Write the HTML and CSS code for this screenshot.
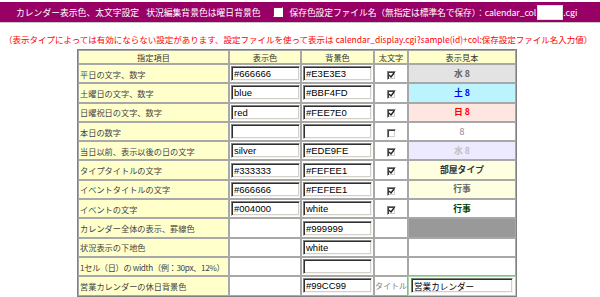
FILE: index.html
```html
<!DOCTYPE html>
<html lang="ja">
<head>
<meta charset="utf-8">
<title>カレンダー表示色、太文字設定</title>
<link rel="stylesheet" href="styles.css">
</head>
<body>
<div class="topbar">
  <span class="title">カレンダー表示色、太文字設定</span>
  <span class="lbl">状況編集背景色は曜日背景色</span>
  <span class="cb cb-bar"></span>
  <span class="lbl tight">保存色設定ファイル名（無指定は標準名で保存）：calendar_col</span>
  <input class="fname" type="text" value="">
  <span class="lbl">.cgi</span>
</div>
<p class="note">（表示タイプによっては有効にならない設定があります、設定ファイルを使って表示は calendar_display.cgi?sample(id)+col:保存設定ファイル名入力値）</p>
<table class="grid">
  <colgroup>
    <col class="c1"><col class="c2"><col class="c3"><col class="c4"><col class="c5">
  </colgroup>
  <tr class="head">
    <th>指定項目</th><th>表示色</th><th>背景色</th><th>太文字</th><th>表示見本</th>
  </tr>
  <tr>
    <td class="item">平日の文字、数字</td>
    <td><input class="tx" type="text" value="#666666"></td>
    <td><input class="tx" type="text" value="#E3E3E3"></td>
    <td class="ck"><span class="cb"><svg viewBox="0 0 7 7"><path d="M1 3 L3 5 L6 1" /></svg></span></td>
    <td class="smp" style="background:#E3E3E3;color:#666666">水 8</td>
  </tr>
  <tr>
    <td class="item">土曜日の文字、数字</td>
    <td><input class="tx" type="text" value="blue"></td>
    <td><input class="tx" type="text" value="#BBF4FD"></td>
    <td class="ck"><span class="cb"><svg viewBox="0 0 7 7"><path d="M1 3 L3 5 L6 1" /></svg></span></td>
    <td class="smp" style="background:#BBF4FD;color:blue">土 8</td>
  </tr>
  <tr>
    <td class="item">日曜祝日の文字、数字</td>
    <td><input class="tx" type="text" value="red"></td>
    <td><input class="tx" type="text" value="#FEE7E0"></td>
    <td class="ck"><span class="cb"><svg viewBox="0 0 7 7"><path d="M1 3 L3 5 L6 1" /></svg></span></td>
    <td class="smp" style="background:#FEE7E0;color:red">日 8</td>
  </tr>
  <tr>
    <td class="item">本日の数字</td>
    <td><input class="tx" type="text" value=""></td>
    <td><input class="tx" type="text" value=""></td>
    <td class="ck"><span class="cb"></span></td>
    <td class="smp plain">8</td>
  </tr>
  <tr>
    <td class="item">当日以前、表示以後の日の文字</td>
    <td><input class="tx" type="text" value="silver"></td>
    <td><input class="tx" type="text" value="#EDE9FE"></td>
    <td class="ck"><span class="cb"><svg viewBox="0 0 7 7"><path d="M1 3 L3 5 L6 1" /></svg></span></td>
    <td class="smp" style="background:#EDE9FE;color:silver">水 8</td>
  </tr>
  <tr>
    <td class="item">タイプタイトルの文字</td>
    <td><input class="tx" type="text" value="#333333"></td>
    <td><input class="tx" type="text" value="#FEFEE1"></td>
    <td class="ck"><span class="cb"><svg viewBox="0 0 7 7"><path d="M1 3 L3 5 L6 1" /></svg></span></td>
    <td class="smp" style="background:#FEFEE1;color:#333333">部屋タイプ</td>
  </tr>
  <tr>
    <td class="item">イベントタイトルの文字</td>
    <td><input class="tx" type="text" value="#666666"></td>
    <td><input class="tx" type="text" value="#FEFEE1"></td>
    <td class="ck"><span class="cb"><svg viewBox="0 0 7 7"><path d="M1 3 L3 5 L6 1" /></svg></span></td>
    <td class="smp" style="background:#FEFEE1;color:#666666">行事</td>
  </tr>
  <tr>
    <td class="item">イベントの文字</td>
    <td><input class="tx" type="text" value="#004000"></td>
    <td><input class="tx" type="text" value="white"></td>
    <td class="ck"><span class="cb"><svg viewBox="0 0 7 7"><path d="M1 3 L3 5 L6 1" /></svg></span></td>
    <td class="smp" style="background:white;color:#004000">行事</td>
  </tr>
  <tr>
    <td class="item">カレンダー全体の表示、罫線色</td>
    <td></td>
    <td><input class="tx" type="text" value="#999999"></td>
    <td></td>
    <td class="smp" style="background:#999999"></td>
  </tr>
  <tr>
    <td class="item">状況表示の下地色</td>
    <td></td>
    <td><input class="tx" type="text" value="white"></td>
    <td></td>
    <td></td>
  </tr>
  <tr>
    <td class="item fit">1セル（日）の width（例：30px、12%）</td>
    <td></td>
    <td><input class="tx" type="text" value=""></td>
    <td></td>
    <td></td>
  </tr>
  <tr>
    <td class="item">営業カレンダーの休日背景色</td>
    <td></td>
    <td><input class="tx" type="text" value="#99CC99"></td>
    <td class="ttl">タイトル</td>
    <td class="titlecell"><input class="tx wide" type="text" value="営業カレンダー"></td>
  </tr>
</table>
</body>
</html>
```
FILE: styles.css
```css
html, body {
  margin: 0;
  padding: 0;
  background: #ffffff;
}
body {
  font-family: "Noto Sans CJK JP", "Liberation Sans", sans-serif;
  font-size: 8.2px;
  color: #333333;
}
.topbar {
  margin-top: 2px;
  height: 20px;
  background: #990066;
  border-bottom: 1px solid #c8c8c8;
  display: flex;
  align-items: center;
  padding-left: 16px;
  color: #ffffff;
  white-space: nowrap;
  font-size: 8.8px;
}
.topbar .title {
  margin-right: 7px;
}
.topbar .lbl {
  color: #ffffff;
}
.topbar .tight {
  letter-spacing: -0.12px;
}
.cb {
  display: inline-block;
  width: 9px;
  height: 9px;
  box-sizing: border-box;
  background: #ffffff;
  border: 1px solid;
  border-color: #808080 #ffffff #ffffff #808080;
  box-shadow: inset 1px 1px 0 #404040, inset -1px -1px 0 #d4d0c8;
  position: relative;
  vertical-align: middle;
}
.cb svg {
  position: absolute;
  left: 0;
  top: 0;
  width: 7px;
  height: 7px;
}
.cb svg path {
  fill: none;
  stroke: #222;
  stroke-width: 1.4;
}
.cb-bar {
  width: 10px;
  height: 10px;
  margin: 0 7px 0 12px;
  border-color: #404040 #ffffff #ffffff #404040;
  box-shadow: none;
}
.fname {
  width: 26px;
  height: 15px;
  box-sizing: border-box;
  border: 1px solid #e0e0e0;
  background: #ffffff;
  padding: 0;
  margin: 0 0 0 1px;
}
.note {
  margin: 0;
  padding: 9px 0 0 4px;
  height: 15px;
  line-height: 15px;
  color: #ff0000;
  white-space: nowrap;
  font-size: 8.5px;
}
.grid {
  margin: 2px 0 0 77px;
  border-collapse: separate;
  border-spacing: 0;
  table-layout: fixed;
  width: 439px;
  border: 1px solid #808080;
}
.c1 { width: 151px; }
.c2 { width: 72px; }
.c3 { width: 73px; }
.c4 { width: 34px; }
.c5 { width: 108px; }
.grid th, .grid td {
  border: 1px solid #a8a8a8;
  padding: 0 1px;
  overflow: hidden;
  white-space: nowrap;
  line-height: 12px;
}
.grid th {
  background: #ffffcc;
  font-weight: normal;
  height: 10px;
  color: #333333;
  text-align: center;
}
.grid td {
  height: 17.3px;
  background: #ffffff;
}
.grid td.item {
  background: #ffffcc;
  color: #444444;
}
.grid td.fit {
  letter-spacing: -0.35px;
}
.tx {
  display: block;
  width: 69px;
  height: 15px;
  box-sizing: border-box;
  margin: 0;
  padding: 0 0 0 2px;
  font-family: "Liberation Sans", "Noto Sans CJK JP", sans-serif;
  font-size: 9.5px;
  color: #000000;
  background: #ffffff;
  border: 1px solid;
  border-color: #808080 #f4f4f4 #f4f4f4 #808080;
  box-shadow: inset 1px 1px 0 #303030, inset -1px -1px 0 #d4d0c8;
  outline: none;
}
.tx.wide {
  width: 102px;
  font-family: "Noto Sans CJK JP", sans-serif;
  font-size: 8.6px;
  margin-left: 2px;
}
.ck {
  text-align: center;
}
.smp {
  text-align: center;
  font-weight: bold;
  font-size: 8.8px;
}
.smp.plain {
  font-weight: normal;
  color: #7080a0;
}
.grid td.ttl {
  color: #808080;
  padding: 0;
  text-align: center;
  font-size: 8px;
}
.grid td.titlecell {
  border-color: #a8d8a8;
  padding: 0;
}
```
